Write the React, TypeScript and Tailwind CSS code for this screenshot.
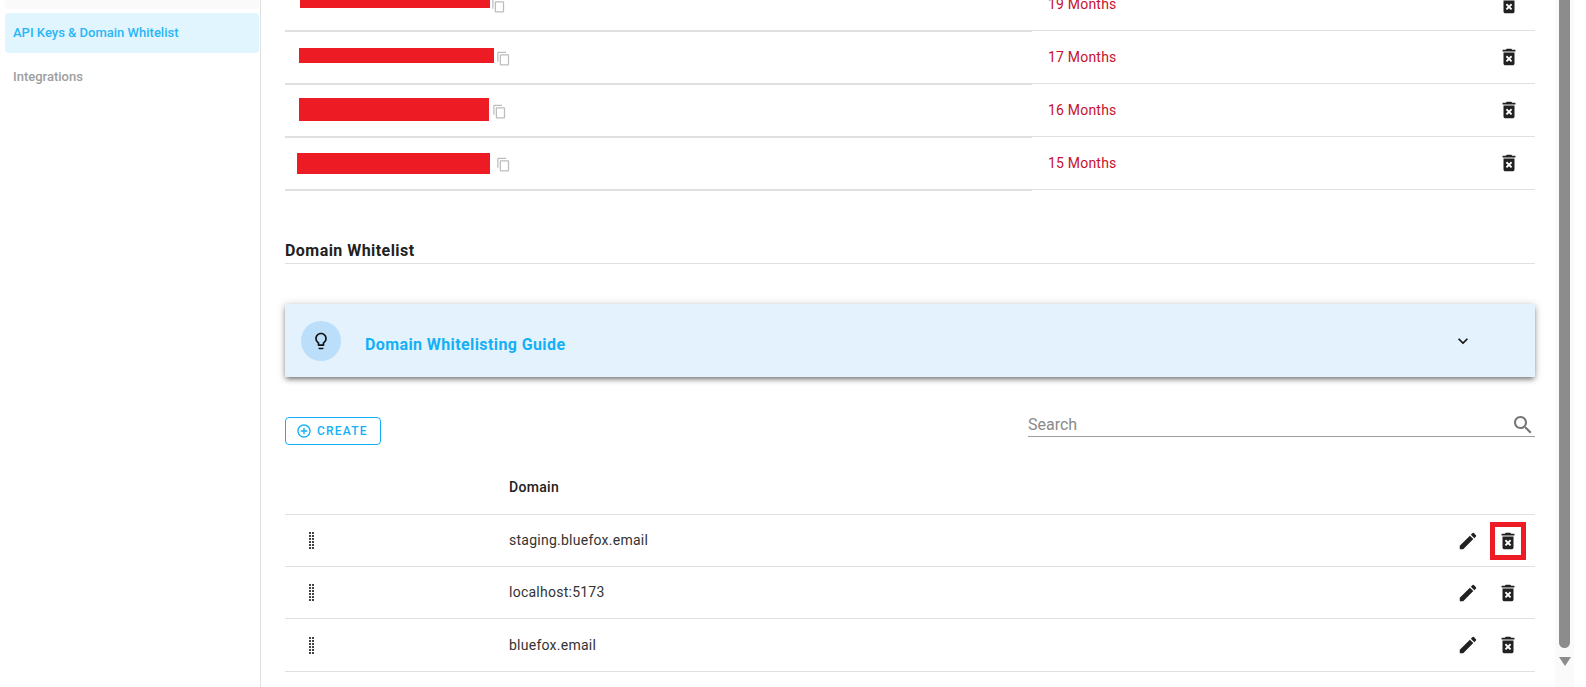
import React from 'react';

const keyRows = [
  { months: '19 Months', bar: 'ml-[15px] w-[190px] h-[31px] -mt-[23px]', copy: 'ml-[1px]', nudge: '' },
  { months: '17 Months', bar: 'ml-[14px] w-[195px] h-[15px]', copy: 'ml-[2px]', nudge: '-mt-[4px]' },
  { months: '16 Months', bar: 'ml-[14px] w-[190px] h-[23px]', copy: 'ml-[3px]', nudge: '-mt-[2px]' },
  { months: '15 Months', bar: 'ml-[12px] w-[193px] h-[21px]', copy: 'ml-[6px]', nudge: '' }
];

const domains = ['staging.bluefox.email', 'localhost:5173', 'bluefox.email'];

const Icon = ({ d, className }: { d: string; className: string }) => (
  <svg viewBox="0 0 24 24" fill="currentColor" className={className}>
    <path d={d} />
  </svg>
);

const trash =
  'M6 19c0 1.1.9 2 2 2h8c1.1 0 2-.9 2-2V7H6v12zm2.46-7.12 1.41-1.41L12 12.59l2.12-2.12 1.41 1.41L13.41 14l2.12 2.12-1.41 1.41L12 15.41l-2.12 2.12-1.41-1.41L10.59 14l-2.13-2.12zM15.5 4l-1-1h-5l-1 1H5v2h14V4z';
const pencil =
  'M3 17.25V21h3.75L17.81 9.94l-3.75-3.75L3 17.25zM20.71 7.04c.39-.39.39-1.02 0-1.41l-2.34-2.34a.9959.9959 0 0 0-1.41 0l-1.83 1.83 3.75 3.75 1.83-1.83z';
const copy =
  'M16 1H4c-1.1 0-2 .9-2 2v14h2V3h12V1zm3 4H8c-1.1 0-2 .9-2 2v14c0 1.1.9 2 2 2h11c1.1 0 2-.9 2-2V7c0-1.1-.9-2-2-2zm0 16H8V7h11v14z';
const search =
  'M15.5 14h-.79l-.28-.27C15.41 12.59 16 11.11 16 9.5 16 5.91 13.09 3 9.5 3S3 5.91 3 9.5 5.91 16 9.5 16c1.61 0 3.09-.59 4.23-1.57l.27.28v.79l5 4.99L20.49 19l-4.99-5zm-6 0C7.01 14 5 11.99 5 9.5S7.01 5 9.5 5 14 7.01 14 9.5 11.99 14 9.5 14z';
const chevron = 'M16.59 8.59 12 13.17 7.41 8.59 6 10l6 6 6-6z';
const bulb =
  'M9 21c0 .55.45 1 1 1h4c.55 0 1-.45 1-1v-1H9v1zm3-19C8.14 2 5 5.14 5 9c0 2.38 1.19 4.47 3 5.74V17c0 .55.45 1 1 1h6c.55 0 1-.45 1-1v-2.26c1.81-1.27 3-3.36 3-5.74 0-3.86-3.14-7-7-7zm2.85 11.1-.85.6V16h-4v-2.3l-.85-.6C7.8 12.16 7 10.63 7 9c0-2.76 2.24-5 5-5s5 2.24 5 5c0 1.63-.8 3.16-2.15 4.1z';
const addCircle =
  'M13 7h-2v4H7v2h4v4h2v-4h4v-2h-4V7zm-1-5C6.48 2 2 6.48 2 12s4.48 10 10 10 10-4.48 10-10S17.52 2 12 2zm0 18c-4.41 0-8-3.59-8-8s3.59-8 8-8 8 3.59 8 8-3.59 8-8 8z';

const DragDots = () => (
  <svg viewBox="0 0 6 17" className="h-[17px] w-[6px] text-[#444]" fill="currentColor">
    {[0, 1, 2, 3, 4, 5].map(row =>
      [0, 3].map(col => <rect key={`${row}-${col}`} x={col} y={row * 3} width="2" height="2" />)
    )}
  </svg>
);

export default function App() {
  return (
    <div className="flex h-[687px] w-[1586px] overflow-hidden bg-white font-['Roboto',sans-serif] text-[14px] text-[#333]">
      {/* sidebar */}
      <aside className="w-[261px] shrink-0 border-r border-[#e0e0e0] pl-[5px] pr-[1px]">
        <div className="h-[9px] rounded-b bg-[#fafafa]" />
        <div className="mt-[4px] flex h-[40px] items-center rounded bg-[#e1f5fe] pl-[8px] text-[13px] font-medium text-[#29b6f6]">
          API Keys &amp; Domain Whitelist
        </div>
        <div className="flex h-[47px] items-center pl-[8px] text-[13px] font-medium text-[#9e9e9e]">Integrations</div>
      </aside>

      <main className="w-[1294px] shrink-0 pl-[24px] pr-[20px]">
        {/* api keys, scrolled partly out of view */}
        <div>
          {keyRows.map((row, i) => (
            <div key={row.months} className={`flex border-b border-[#e0e0e0] ${i === 0 ? 'h-[31px]' : 'h-[53px]'}`}>
              <div className={`-mb-[2px] flex w-[747px] shrink-0 border-b-2 border-[#e0e0e0] ${i === 0 ? 'items-start' : 'items-center'}`}>
                <div className={`shrink-0 bg-[#ed1c24] ${row.bar} ${row.nudge}`} />
                <Icon d={copy} className={`${i === 0 ? '-mt-[2px]' : 'mt-[2px]'} h-[15px] w-[15px] shrink-0 text-[#bdbdbd] ${row.copy}`} />
              </div>
              <div className={`flex flex-1 items-center justify-between pl-[16px] pr-[15px] ${i === 0 ? 'pb-[21px]' : ''}`}>
                <span className="tracking-[0.2px] text-[#c8102e]">{row.months}</span>
                <Icon d={trash} className="h-[22px] w-[22px] text-[#212121]" />
              </div>
            </div>
          ))}
        </div>

        <h2 className="mt-[51px] border-b border-[#e0e0e0] pb-[2px] text-[16px] leading-[20px] font-bold tracking-[0.45px] text-[#212121]">
          Domain Whitelist
        </h2>

        {/* guide */}
        <div className="mt-[40px] flex h-[73px] items-start bg-[#e3f2fd] pl-[16px] shadow-[0_3px_5px_-1px_rgba(0,0,0,0.45),0_1px_8px_0_rgba(0,0,0,0.22)]">
          <div className="mt-[17px] flex h-[40px] w-[40px] items-center justify-center rounded-full bg-[#bbdefb]">
            <Icon d={bulb} className="h-[20px] w-[20px] text-[#111]" />
          </div>
          <div className="mt-[31px] ml-[24px] flex-1 text-[16px] leading-[20px] font-bold tracking-[0.4px] text-[#14b0f5]">
            Domain Whitelisting Guide
          </div>
          <Icon d={chevron} className="mt-[27px] mr-[62px] h-[20px] w-[20px] text-[#111]" />
        </div>

        {/* toolbar */}
        <div className="mt-[40px] flex items-start justify-between">
          <button className="flex h-[28px] w-[96px] items-center rounded border border-[#14b0f5] pl-[10px] text-[12px] font-medium tracking-[1.2px] text-[#14b0f5]">
            <Icon d={addCircle} className="mr-[5px] h-[16px] w-[16px]" />
            CREATE
          </button>
          <div className="-mt-[4px] flex h-[24px] w-[507px] items-center justify-between border-b border-[#9e9e9e]">
            <span className="text-[16px] text-[#8a8a8a]">Search</span>
            <Icon d={search} className="h-[24px] w-[24px] text-[#757575]" />
          </div>
        </div>

        {/* domain table */}
        <div className="mt-[21px] flex h-[49px] items-center border-b border-[#e0e0e0] pb-[5px] pl-[224px] font-medium tracking-[0.3px] text-[#212121]">
          Domain
        </div>
        {domains.map((domain, i) => (
          <div key={domain} className={`flex items-center border-b border-[#e0e0e0] ${i === 2 ? 'h-[53px]' : 'h-[52px]'}`}>
            <div className="w-[224px] pl-[24px]">
              <DragDots />
            </div>
            <span className="flex-1 tracking-[0.25px]">{domain}</span>
            <Icon d={pencil} className="mr-[11px] h-[22px] w-[22px] text-[#212121]" />
            <div className={`mr-[9px] flex h-[38px] w-[36px] items-center justify-center ${i === 0 ? 'border-[5px] border-[#ed1c24]' : ''}`}>
              <Icon d={trash} className="h-[22px] w-[22px] shrink-0 text-[#212121]" />
            </div>
          </div>
        ))}
      </main>

      {/* scrollbar */}
      <div className="flex w-[19px] shrink-0 flex-col items-center bg-[#fafafa]">
        <div className="h-[648px] w-[11px] rounded-b-full bg-[#8c8c8c]" />
        <div className="mt-[9px] h-0 w-0 border-x-[6px] border-t-[9px] border-x-transparent border-t-[#8c8c8c]" />
      </div>
    </div>
  );
}
